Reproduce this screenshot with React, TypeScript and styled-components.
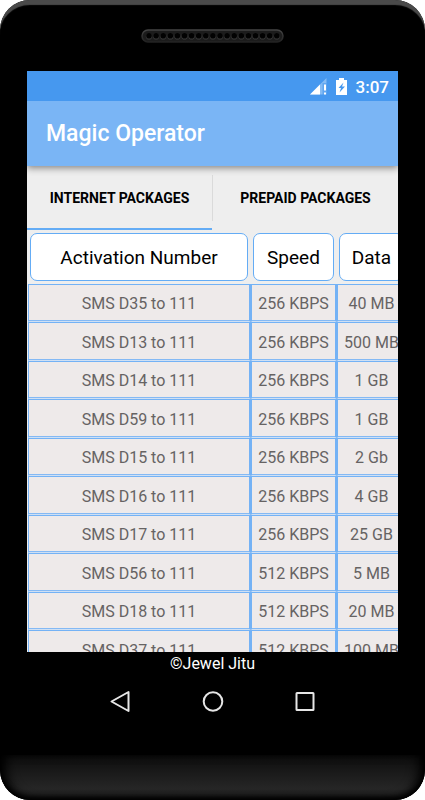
import React from "react";
import styled, { createGlobalStyle } from "styled-components";

const GlobalStyle = createGlobalStyle`
  *, *::before, *::after { box-sizing: border-box; }
  body { margin: 0; background: #ffffff; font-family: Roboto, "Liberation Sans", sans-serif; }
`;

const Phone = styled.div`
  display: flex;
  flex-direction: column;
  height: 100vh;
  min-height: 480px;
  overflow: hidden;
  background: #000000;
  border-radius: 30px;
  box-shadow: inset 0 6px 1px -1px #4a4a4a;
`;

const Forehead = styled.div`
  display: flex;
  justify-content: center;
  flex: 0 0 71px;
  padding-top: 29px;
`;

const Display = styled.div`
  display: flex;
  flex-direction: column;
  flex: 1 1 0;
  min-height: 0;
  margin: 0 27px;
  background: #eeeeee;
  overflow: hidden;
`;

const StatusBar = styled.div`
  position: relative;
  z-index: 1;
  display: flex;
  flex: 0 0 30px;
  align-items: center;
  justify-content: flex-end;
  padding: 2px 9px 0 0;
  background: #4698ef;
  color: #ffffff;
  font-size: 17px;
  font-weight: 500;
  line-height: 20px;
`;

const StatusIcons = styled.svg`
  margin-right: 8px;
`;

const AppBar = styled.header`
  position: relative;
  display: flex;
  flex: 0 0 65px;
  align-items: center;
  padding-left: 19px;
  background: #7ab5f5;
  box-shadow: 0 2px 7px rgba(0, 0, 0, 0.45);
`;

const Title = styled.h1`
  margin: 0;
  color: #ffffff;
  font-size: 23px;
  font-weight: 500;
  line-height: 28px;
`;

const Tabs = styled.div`
  display: flex;
  flex: 0 0 64px;
`;

const Tab = styled.button<{ $active?: boolean }>`
  display: flex;
  flex: 1 1 0;
  align-items: center;
  justify-content: center;
  padding: 2px 0 0;
  border: 0;
  border-bottom: 2px solid ${(p) => (p.$active ? "#64acf5" : "transparent")};
  background: none;
  color: #000000;
  font-family: inherit;
  font-size: 14px;
  font-weight: 700;
`;

const TabDivider = styled.span`
  width: 1px;
  height: 46px;
  margin-top: 9px;
  background: #dadada;
`;

const TableArea = styled.div`
  flex: 1 1 0;
  min-height: 0;
  padding: 1px 0 0 1px;
  overflow: hidden;
`;

const PackageTable = styled.table`
  table-layout: fixed;
  width: 379px;
  border-collapse: separate;
  border-spacing: 0;
`;

const Column = styled.col<{ $width: number }>`
  width: ${(p) => p.$width}px;
`;

const HeadCell = styled.th`
  padding: 2px 3px 3px 2px;
  font-weight: 400;
`;

const HeadLabel = styled.div`
  height: 48px;
  border: 1px solid #64acf5;
  border-radius: 7px;
  background: #ffffff;
  color: #000000;
  font-size: 19px;
  line-height: 47px;
  text-align: center;
`;

const Row = styled.tr`
  height: 38px;
  &:nth-child(even) { height: 39px; }
`;

const Cell = styled.td`
  padding: 2px 0 0;
  border: 1px solid #74b2f5;
  border-right-width: 2px;
  border-bottom-color: #cfe0f4;
  background: #eeeaea;
  box-shadow: inset 0 -1px #84b9f4;
  color: #666363;
  font-size: 16px;
  line-height: 20px;
  text-align: center;
  white-space: nowrap;
`;

const Credit = styled.div`
  flex: 0 0 24px;
  color: #ffffff;
  font-size: 16px;
  line-height: 24px;
  text-align: center;
`;

const NavBar = styled.nav`
  display: flex;
  flex: 0 0 79px;
  align-items: flex-start;
  justify-content: center;
  gap: 64px;
  padding-top: 11px;
`;

const NavButton = styled.button`
  width: 28px;
  height: 28px;
  padding: 0;
  border: 0;
  background: none;
`;

const Chin = styled.div`
  flex: 0 0 45px;
  border-radius: 0 0 30px 30px;
  background: linear-gradient(#0d0d0d, #262626 75%, #1c1c1c);
  box-shadow: inset 0 -3px 5px #000000, inset 10px 0 12px -4px #000000, inset -10px 0 12px -4px #000000;
`;

const holes = Array.from({ length: 19 }, (_, i) => 8 + i * 7.1);

const packages = [
  ["SMS D35 to 111", "256 KBPS", "40 MB"],
  ["SMS D13 to 111", "256 KBPS", "500 MB"],
  ["SMS D14 to 111", "256 KBPS", "1 GB"],
  ["SMS D59 to 111", "256 KBPS", "1 GB"],
  ["SMS D15 to 111", "256 KBPS", "2 Gb"],
  ["SMS D16 to 111", "256 KBPS", "4 GB"],
  ["SMS D17 to 111", "256 KBPS", "25 GB"],
  ["SMS D56 to 111", "512 KBPS", "5 MB"],
  ["SMS D18 to 111", "512 KBPS", "20 MB"],
  ["SMS D37 to 111", "512 KBPS", "100 MB"],
];

function Speaker() {
  return (
    <svg width="143" height="14" aria-hidden="true">
      <defs>
        <linearGradient id="rim" x1="0" y1="0" x2="0" y2="1">
          <stop offset="0" stopColor="#444444" />
          <stop offset="1" stopColor="#222222" />
        </linearGradient>
      </defs>
      <rect x="1" y="1" width="141" height="12" rx="6" fill="#1c1c1c" stroke="url(#rim)" strokeWidth="1.5" />
      {holes.map((x) => (
        <g key={x}>
          <circle cx={x} cy="7.4" r="3.1" fill="#3a3a3a" />
          <circle cx={x} cy="6.8" r="2.8" fill="#020202" />
        </g>
      ))}
    </svg>
  );
}

export default function App() {
  return (
    <>
      <GlobalStyle />
      <Phone>
        <Forehead>
          <Speaker />
        </Forehead>
        <Display>
          <StatusBar>
            <StatusIcons width="38" height="20" viewBox="0 0 38 20" aria-hidden="true">
              <path d="M0 17.5 16.5 1v16.5z" fill="#ffffff" opacity="0.35" />
              <path d="M0 17.5 10 7.5v10z" fill="#ffffff" />
              <path d="M12.5 6h4v12h-4z" fill="#4698ef" opacity="0.6" />
              <path d="M14 7.5h2v6h-2zM14 15.5h2v2h-2z" fill="#ffffff" />
              <path d="M29 1h5v2h3v15H26V3h3z" fill="#ffffff" />
              <path d="M33.5 5.5 28.500 11H31l-1.500 4.500L35 9.500h-3z" fill="#4698ef" />
            </StatusIcons>
            <span>3:07</span>
          </StatusBar>
          <AppBar>
            <Title>Magic Operator</Title>
          </AppBar>
          <Tabs role="tablist">
            <Tab type="button" role="tab" aria-selected="true" $active>INTERNET PACKAGES</Tab>
            <TabDivider />
            <Tab type="button" role="tab" aria-selected="false">PREPAID PACKAGES</Tab>
          </Tabs>
          <TableArea>
            <PackageTable>
              <colgroup>
                <Column $width={223} />
                <Column $width={86} />
                <Column $width={70} />
              </colgroup>
              <thead>
                <tr>
                  {["Activation Number", "Speed", "Data"].map((label) => (
                    <HeadCell key={label} scope="col">
                      <HeadLabel>{label}</HeadLabel>
                    </HeadCell>
                  ))}
                </tr>
              </thead>
              <tbody>
                {packages.map((row) => (
                  <Row key={row[0]}>
                    {row.map((value) => (
                      <Cell key={value}>{value}</Cell>
                    ))}
                  </Row>
                ))}
              </tbody>
            </PackageTable>
          </TableArea>
        </Display>
        <Credit>©Jewel Jitu</Credit>
        <NavBar aria-label="System">
          <NavButton type="button" aria-label="Back">
            <svg width="28" height="28" fill="none" stroke="#e6e6e6" strokeWidth="2" strokeLinejoin="round">
              <path d="M4.5 14.5 21.5 5v19z" />
            </svg>
          </NavButton>
          <NavButton type="button" aria-label="Home">
            <svg width="28" height="28" fill="none" stroke="#e6e6e6" strokeWidth="2">
              <circle cx="14" cy="14.5" r="9.3" />
            </svg>
          </NavButton>
          <NavButton type="button" aria-label="Recent apps">
            <svg width="28" height="28" fill="none" stroke="#e6e6e6" strokeWidth="2" strokeLinejoin="round">
              <rect x="5.5" y="6" width="17" height="17" rx="0.5" />
            </svg>
          </NavButton>
        </NavBar>
        <Chin />
      </Phone>
    </>
  );
}
